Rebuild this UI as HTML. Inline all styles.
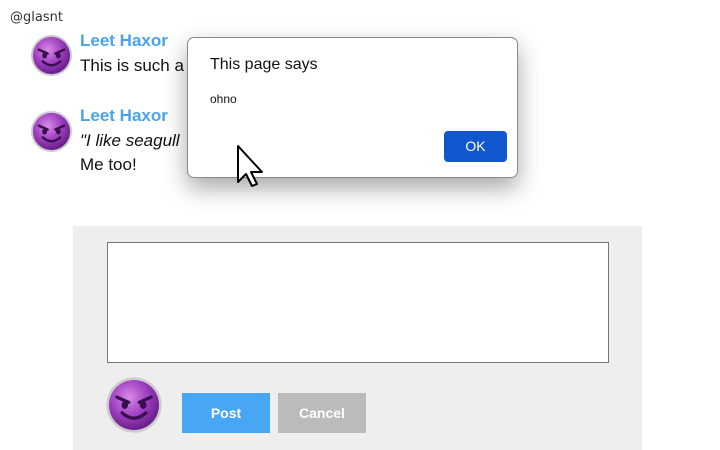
<!DOCTYPE html>
<html><head><meta charset="utf-8"><style>
body{margin:0;width:720px;height:450px;position:relative;overflow:hidden;background:#fff;font-family:"Liberation Sans",sans-serif}
.a{position:absolute}
.name{color:#4aa3ee;font-weight:bold;font-size:17px}
.t{font-size:17px;color:#111}
</style></head><body>
<svg width="0" height="0" style="position:absolute"><defs>
<radialGradient id="g" cx="40%" cy="35%" r="65%"><stop offset="0" stop-color="#d98ae8"/><stop offset="0.6" stop-color="#9b3dbd"/><stop offset="1" stop-color="#6a1f8c"/></radialGradient>
<symbol id="av" viewBox="0 0 44 44">
<circle cx="22" cy="22" r="21" fill="#ccc"/><circle cx="22" cy="22" r="19" fill="url(#g)"/>
<path d="M9 16 L18 20 M35 16 L26 20" stroke="#3a0f4f" stroke-width="2.5" stroke-linecap="round"/>
<ellipse cx="15" cy="22" rx="2.5" ry="3" fill="#3a0f4f"/><ellipse cx="29" cy="22" rx="2.5" ry="3" fill="#3a0f4f"/>
<path d="M13 28 Q22 36 31 28" stroke="#3a0f4f" stroke-width="2.5" fill="none" stroke-linecap="round"/>
</symbol></defs></svg>
<div class="a" style="left:10px;top:10px;font-size:13px;color:#333;font-family:'DejaVu Sans',sans-serif">@glasnt</div>
<svg class="a" style="left:30px;top:34px" width="43" height="43"><use href="#av"/></svg>
<div class="a name" style="left:80px;top:31px">Leet Haxor</div>
<div class="a t" style="left:80px;top:56px">This is such a</div>
<svg class="a" style="left:30px;top:110px" width="43" height="43"><use href="#av"/></svg>
<div class="a name" style="left:80px;top:106px">Leet Haxor</div>
<div class="a t" style="left:80px;top:131px;font-style:italic">"I like seagull</div>
<div class="a t" style="left:80px;top:155px">Me too!</div>
<div class="a" style="left:73px;top:226px;width:569px;height:224px;background:#eee"></div>
<div class="a" style="left:107px;top:242px;width:500px;height:119px;background:#fff;border:1px solid #777"></div>
<svg class="a" style="left:105px;top:376px" width="58" height="58" viewBox="0 0 44 44"><use href="#av"/></svg>
<div class="a" style="left:182px;top:393px;width:88px;height:40px;background:#47a7f5;color:#fff;font-weight:bold;font-size:14px;text-align:center;line-height:40px">Post</div>
<div class="a" style="left:278px;top:393px;width:88px;height:40px;background:#bbb;color:#fff;font-weight:bold;font-size:14px;text-align:center;line-height:40px">Cancel</div>
<div class="a" style="left:187px;top:37px;width:329px;height:139px;background:#fff;border:1px solid #888;border-radius:7px;box-shadow:0 10px 24px rgba(0,0,0,0.35)"></div>
<div class="a" style="left:210px;top:56px;font-size:16px;color:#111">This page says</div>
<div class="a" style="left:210px;top:92px;font-size:12px;color:#111">ohno</div>
<div class="a" style="left:444px;top:131px;width:63px;height:31px;background:#1158d0;border-radius:4px;color:#fff;font-size:14px;text-align:center;line-height:31px">OK</div>
<svg class="a" style="left:236px;top:144px" width="30" height="44" viewBox="0 0 30 44"><path d="M2 2 L2 38 L10 30 L16 42 L21 40 L15 28 L26 28 Z" fill="#fff" stroke="#000" stroke-width="2" stroke-linejoin="round"/></svg>
</body></html>
